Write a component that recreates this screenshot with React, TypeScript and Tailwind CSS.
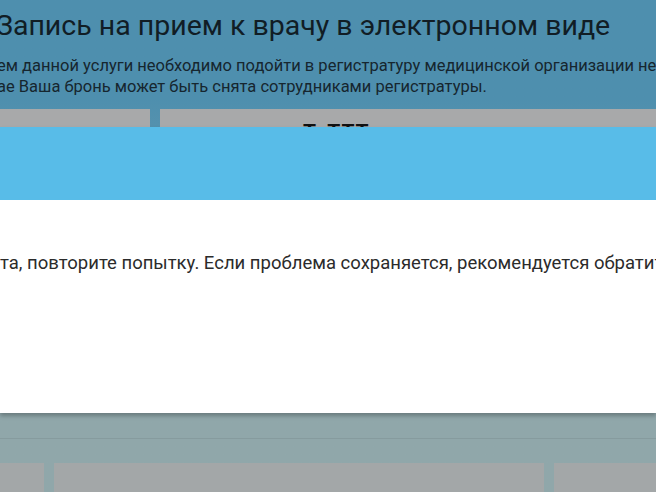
export default function App() {
  return (
    <div className="relative w-[656px] h-[492px] overflow-hidden bg-linear-to-b from-[#4e8fae] from-20% to-[#90a7aa] to-85% font-['Roboto',sans-serif]">
      {/* Page behind the dimmed overlay */}
      <div className="flex flex-col">
        <h1 className="ml-[-4px] pt-[8px] text-[28.5px] leading-[36px] text-[#111d25] whitespace-nowrap">
          Запись на прием к врачу в электронном виде
        </h1>
        <div className="mt-[11px] text-[16.5px] leading-[21px] text-[#16262f] whitespace-nowrap">
          <p className="ml-[-3px]">ем данной услуги необходимо подойти в регистратуру медицинской организации не</p>
          <p className="ml-[-3px]">ае Ваша бронь может быть снята сотрудниками регистратуры.</p>
        </div>
        <div className="mt-[12px] flex gap-[10px] h-[290px]">
          <div className="w-[150px] bg-[#a8a9aa]" />
          <div className="flex-1 bg-[#a8a9aa] pl-[143px] pt-[13px]">
            <span className="text-[21px] font-bold leading-none text-[#111] tracking-[1px]">Т. ТТТ</span>
          </div>
        </div>
        <div className="mt-[39px] h-px bg-[#869b9e]" />
        <div className="mt-[24px] flex gap-[10px] h-[60px]">
          <div className="w-[44px] bg-[#a3a7a8]" />
          <div className="w-[490px] bg-[#a3a7a8]" />
          <div className="flex-1 bg-[#a3a7a8]" />
        </div>
      </div>

      {/* Modal */}
      <div className="absolute inset-x-0 top-[127px] shadow-[0_3px_4px_rgba(0,0,0,0.25)]">
        <div className="h-[73px] bg-[#58bce8]" />
        <div className="h-[213px] bg-white pt-[51px]">
          <p className="text-[18.5px] leading-[24px] text-[#2b2b2b] whitespace-nowrap">
            та, повторите попытку. Если проблема сохраняется, рекомендуется обратиться в регистратуру.
          </p>
        </div>
      </div>
    </div>
  );
}
